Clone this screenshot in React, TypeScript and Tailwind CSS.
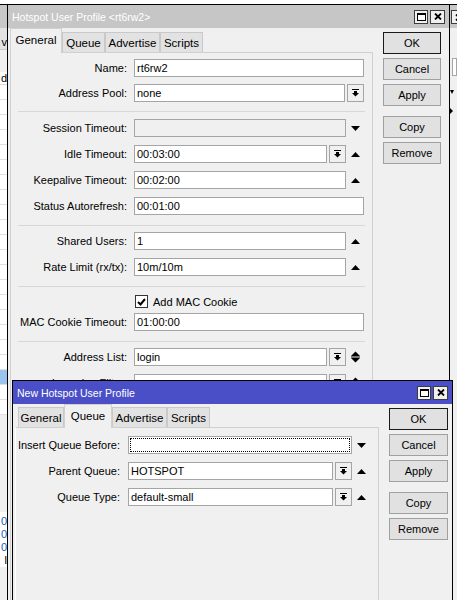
import React from 'react';

const UI = "font-['Liberation_Sans',Arial,sans-serif]";

type Arrow = 'up' | 'down' | 'both';

function DropGlyph() {
  return (
    <svg width="7" height="8" viewBox="0 0 7 8">
      <rect x="0" y="0" width="7" height="1" fill="#000" />
      <rect x="2" y="2" width="3" height="2" fill="#000" />
      <polygon points="0,4 7,4 3.5,7.5" fill="#000" />
    </svg>
  );
}

function ArrowGlyph({dir}: {dir: Arrow}) {
  if (dir === 'both') {
    return (
      <svg width="9" height="12" viewBox="0 0 9 12">
        <polygon points="0,5 4.5,0.5 9,5" fill="#000" />
        <rect x="0" y="5.5" width="9" height="1" fill="#000" />
        <polygon points="0,7 9,7 4.5,11.5" fill="#000" />
      </svg>
    );
  }
  return (
    <svg width="9" height="5" viewBox="0 0 9 5">
      {dir === 'up' ? <polygon points="0,5 4.5,0 9,5" fill="#000" /> : <polygon points="0,0 9,0 4.5,5" fill="#000" />}
    </svg>
  );
}

type FieldProps = {
  value?: string;
  disabled?: boolean;
  focused?: boolean;
  drop?: boolean;
  arrow?: Arrow;
  slot: number;
};

function Field({value, disabled, focused, drop, arrow, slot}: FieldProps) {
  return (
    <div className="flex flex-1 items-center h-[18px]">
      <div
        className={`flex-1 h-[18px] border border-[#a5a5a5] ${disabled ? 'bg-[#f0f0f0]' : 'bg-white'} flex items-center`}
      >
        {focused ? (
          <div className="m-px h-[14px] w-full border border-dotted border-black" />
        ) : (
          <span className="pl-[2px] leading-[16px] whitespace-nowrap">{value}</span>
        )}
      </div>
      {drop && (
        <div className="ml-[2px] w-[17px] h-[18px] border border-[#a5a5a5] bg-[#f0f0f0] flex items-center justify-center">
          <DropGlyph />
        </div>
      )}
      {arrow && (
        <div className="h-[18px] flex items-center justify-center" style={{width: slot}}>
          <ArrowGlyph dir={arrow} />
        </div>
      )}
    </div>
  );
}

type RowProps = FieldProps & {label: string; labelW: string; gap: string; fieldW: string; top: string};

function Row({label, labelW, gap, fieldW, top, ...field}: RowProps) {
  return (
    <div className={`flex items-center h-[18px] ${top}`}>
      <div className={`${labelW} text-right whitespace-nowrap leading-[16px]`}>{label}</div>
      <div className={`${gap} ${fieldW} flex`}>
        <Field {...field} />
      </div>
    </div>
  );
}

function Sep({top}: {top: string}) {
  return <div className={`${top} mx-[7px] h-px bg-[#d8d8d8]`} />;
}

function Btn({label, primary}: {label: string; primary?: boolean}) {
  return (
    <div
      className={`h-[22px] flex items-center justify-center bg-[#e1e1e1] border ${primary ? 'border-[#1a1a1a]' : 'border-[#a0a0a0]'}`}
    >
      {label}
    </div>
  );
}

function MaxBtn() {
  return (
    <div className="w-[14px] h-[14px] border border-[#3c3c3c] bg-[#f0f0f0] flex items-center justify-center">
      <div className="w-[9px] h-[8px] border border-black border-t-2 bg-white" />
    </div>
  );
}

function CloseBtn() {
  return (
    <div className="w-[15px] h-[14px] border border-[#3c3c3c] bg-[#f0f0f0] flex items-center justify-center">
      <svg width="8" height="7" viewBox="0 0 8 7">
        <path d="M1 0.5 L7 6.5 M7 0.5 L1 6.5" stroke="#000" strokeWidth="1.8" />
      </svg>
    </div>
  );
}

function TitleBar({title, bg}: {title: string; bg: string}) {
  return (
    <div className={`h-[23px] ${bg} flex items-center pl-[4px] pr-[4px] text-white`}>
      <span className="flex-1 text-[10.5px] leading-[16px] whitespace-nowrap">{title}</span>
      <div className="flex gap-[2px]">
        <MaxBtn />
        <CloseBtn />
      </div>
    </div>
  );
}

function Tab({label, active, w, h}: {label: string; active?: boolean; w: string; h: string}) {
  return active ? (
    <div
      className={`${w} ${h} relative z-10 -mb-px bg-[#f0f0f0] border border-b-0 border-[#d0d0d0] text-center pt-[3px] leading-[16px] text-[11.5px]`}
    >
      {label}
    </div>
  ) : (
    <div className={`${w} h-[20px] bg-[#e2e2e2] border border-b-0 border-[#c9c9c9] text-center pt-[2px] leading-[16px] text-[11.5px]`}>
      {label}
    </div>
  );
}

function LeftStrip() {
  const rows = Array.from({length: 22});
  return (
    <div className="absolute left-0 top-[4px] w-[7px] h-[596px] border-t border-black bg-[#f0f0f0] flex flex-col overflow-hidden">
      <div className="h-[23px] shrink-0 bg-[#c8c8c8]" />
      <div className="h-[22px] shrink-0 bg-[#e2e2e2] flex justify-end items-end border-b border-[#c9c9c9]">
        <span className="leading-[14px] whitespace-nowrap">v</span>
      </div>
      <div className="h-[22px] shrink-0" />
      <div className="h-[13px] shrink-0 bg-white flex justify-end items-center border-b border-[#d8d8d8]">
        <span className="leading-[12px] whitespace-nowrap">d</span>
      </div>
      {rows.map((_, i) => (
        <div
          key={i}
          className={`h-[15px] shrink-0 border-b border-[#e0e0e0] ${i === 19 ? 'bg-[#99c4ee]' : 'bg-white'}`}
        />
      ))}
      <div className="h-[97px] shrink-0 bg-[#f0f0f0]" />
      <div className="shrink-0 bg-white flex flex-col items-end text-[#1060c0] pt-[3px]">
        <div className="h-[13px] leading-[13px]">0</div>
        <div className="h-[13px] leading-[13px]">0</div>
        <div className="h-[13px] leading-[13px]">0</div>
        <div className="h-[13px] leading-[13px] text-black">l</div>
      </div>
    </div>
  );
}

function RightStrip() {
  return (
    <div className="absolute left-[450px] top-[4px] w-[7px] h-[596px] border-t border-black bg-[#f0f0f0] flex flex-col overflow-hidden">
      <div className="h-[23px] shrink-0 bg-[#c8c8c8] pt-[5px] pl-[1px]">
        <CloseBtn />
      </div>
      <div className="h-[30px] shrink-0" />
      <div className="ml-[2px] h-[18px] shrink-0 border border-[#a5a5a5] bg-white" />
      <div className="mt-[7px] h-[18px] shrink-0 flex items-center">
        <svg width="4" height="5" viewBox="0 0 4 5">
          <polygon points="0,0 4,0 2,4" fill="#000" />
        </svg>
      </div>
      <div className="mt-[1px] h-[18px] shrink-0 flex items-center">
        <svg width="4" height="6" viewBox="0 0 4 6">
          <polygon points="0,0 3,3 0,6" fill="#000" />
        </svg>
      </div>
    </div>
  );
}

function MainWindow() {
  const M = {labelW: 'w-[116px]', gap: 'ml-[7px]', fieldW: 'w-[230px]', slot: 18};
  return (
    <div className="absolute left-[7px] top-[4px] w-[443px] h-[620px] border border-black bg-[#f0f0f0] flex flex-col">
      <TitleBar title="Hotspot User Profile <rt6rw2>" bg="bg-[#c6c6c6]" />
      <div className="flex flex-1">
        <div className="ml-[2px] w-[363px] flex flex-col">
          <div className="h-[24px] flex items-end">
            <Tab label="General" active w="w-[52px]" h="h-[25px]" />
            <Tab label="Queue" w="w-[43px]" h="" />
            <Tab label="Advertise" w="w-[55px]" h="" />
            <Tab label="Scripts" w="w-[43px]" h="" />
          </div>
          <div className="flex-1 border border-b-0 border-[#d0d0d0] flex flex-col pt-[6px]">
            <Row {...M} top="" label="Name:" value="rt6rw2" />
            <Row {...M} top="mt-[7px]" label="Address Pool:" value="none" drop />
            <Sep top="mt-[9px]" />
            <Row {...M} top="mt-[7px]" label="Session Timeout:" disabled arrow="down" />
            <Row {...M} top="mt-[8px]" label="Idle Timeout:" value="00:03:00" drop arrow="up" />
            <Row {...M} top="mt-[8px]" label="Keepalive Timeout:" value="00:02:00" arrow="up" />
            <Row {...M} top="mt-[8px]" label="Status Autorefresh:" value="00:01:00" />
            <Sep top="mt-[10px]" />
            <Row {...M} top="mt-[6px]" label="Shared Users:" value="1" arrow="up" />
            <Row {...M} top="mt-[8px]" label="Rate Limit (rx/tx):" value="10m/10m" arrow="up" />
            <Sep top="mt-[10px]" />
            <div className="mt-[8px] h-[13px] flex items-center">
              <div className="ml-[124px] w-[13px] h-[13px] border border-[#333] bg-white flex items-center justify-center">
                <svg width="9" height="8" viewBox="0 0 9 8">
                  <path d="M1 4 L3.5 6.5 L8 1" stroke="#000" strokeWidth="2" fill="none" />
                </svg>
              </div>
              <span className="ml-[5px] leading-[16px]">Add MAC Cookie</span>
            </div>
            <Row {...M} top="mt-[5px]" label="MAC Cookie Timeout:" value="01:00:00" />
            <Sep top="mt-[10px]" />
            <Row {...M} top="mt-[6px]" label="Address List:" value="login" drop arrow="both" />
            <Row {...M} top="mt-[8px]" label="Incoming Filter:" value="" drop arrow="both" />
          </div>
        </div>
        <div className="ml-[10px] w-[58px] pt-[4px] flex flex-col">
          <Btn label="OK" primary />
          <div className="mt-[4px]"><Btn label="Cancel" /></div>
          <div className="mt-[4px]"><Btn label="Apply" /></div>
          <div className="mt-[10px]"><Btn label="Copy" /></div>
          <div className="mt-[4px]"><Btn label="Remove" /></div>
        </div>
      </div>
    </div>
  );
}

function NewWindow() {
  const N = {labelW: 'w-[104px]', gap: 'ml-[8px]', fieldW: 'w-[243px]', slot: 19};
  return (
    <div className="absolute left-[12px] top-[380px] w-[441px] h-[240px] border border-black bg-[#f0f0f0] flex flex-col">
      <TitleBar title="New Hotspot User Profile" bg="bg-[#4a4fc8]" />
      <div className="flex flex-1">
        <div className="ml-[2px] w-[364px] flex flex-col">
          <div className="h-[23px] pl-[3px] flex items-end">
            <Tab label="General" w="w-[46px]" h="" />
            <Tab label="Queue" active w="w-[48px]" h="h-[24px]" />
            <Tab label="Advertise" w="w-[55px]" h="" />
            <Tab label="Scripts" w="w-[43px]" h="" />
          </div>
          <div className="flex-1 border border-b-0 border-[#d0d0d0] border-l-white flex flex-col pt-[8px]">
            <Row {...N} top="" label="Insert Queue Before:" focused arrow="down" />
            <Row {...N} top="mt-[8px]" label="Parent Queue:" value="HOTSPOT" drop arrow="up" />
            <Row {...N} top="mt-[8px]" label="Queue Type:" value="default-small" drop arrow="up" />
          </div>
        </div>
        <div className="ml-[10px] w-[59px] pt-[4px] flex flex-col">
          <Btn label="OK" primary />
          <div className="mt-[4px]"><Btn label="Cancel" /></div>
          <div className="mt-[4px]"><Btn label="Apply" /></div>
          <div className="mt-[10px]"><Btn label="Copy" /></div>
          <div className="mt-[4px]"><Btn label="Remove" /></div>
        </div>
      </div>
    </div>
  );
}

export default function App() {
  return (
    <div className={`relative w-[457px] h-[600px] overflow-hidden bg-white text-[11px] text-black ${UI}`}>
      <LeftStrip />
      <RightStrip />
      <MainWindow />
      <NewWindow />
    </div>
  );
}
